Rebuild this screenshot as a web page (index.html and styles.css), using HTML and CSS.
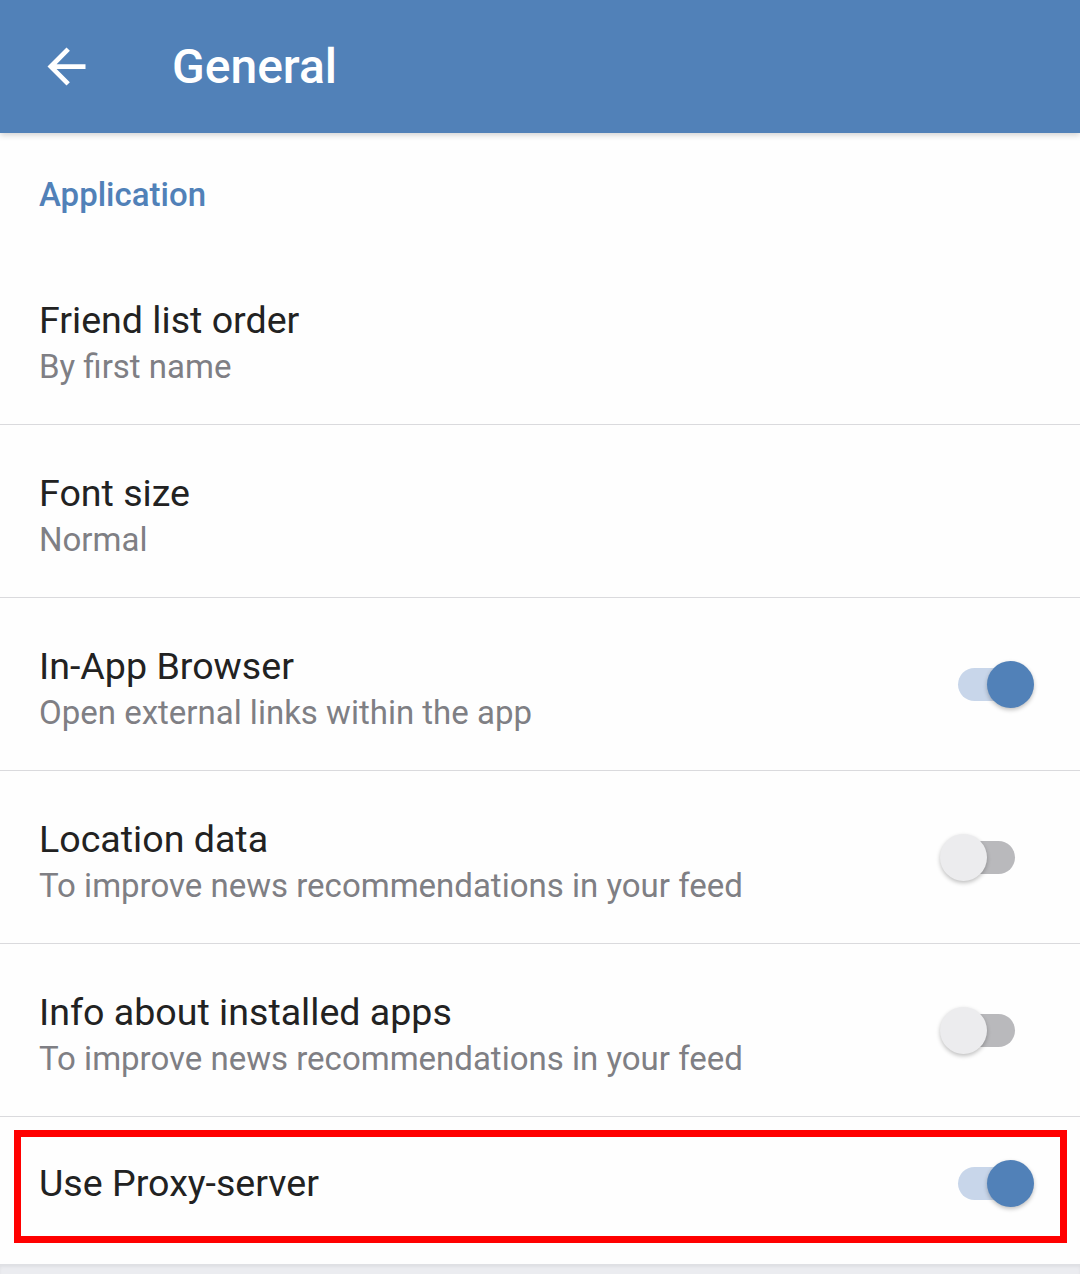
FILE: index.html
```html
<!DOCTYPE html>
<html lang="en">
<head>
    <meta charset="UTF-8">
    <title>General</title>
    <link rel="stylesheet" href="styles.css">
</head>
<body>
<header class="toolbar">
    <svg class="back" viewBox="0 0 24 24" width="57" height="57">
        <path d="M20 11H7.83l5.59-5.59L12 4l-8 8 8 8 1.41-1.41L7.83 13H20v-2z" fill="#fff"/>
    </svg>
    <h1>General</h1>
</header>

<div class="settings">
    <div class="group-title">Application</div>

    <div class="pref">
        <div class="pref-text">
            <div class="pref-title">Friend list order</div>
            <div class="pref-summary">By first name</div>
        </div>
    </div>

    <div class="pref">
        <div class="pref-text">
            <div class="pref-title">Font size</div>
            <div class="pref-summary">Normal</div>
        </div>
    </div>

    <div class="pref">
        <div class="pref-text">
            <div class="pref-title">In-App Browser</div>
            <div class="pref-summary">Open external links within the app</div>
        </div>
        <span class="switch on"><span class="track"></span><span class="thumb"></span></span>
    </div>

    <div class="pref">
        <div class="pref-text">
            <div class="pref-title">Location data</div>
            <div class="pref-summary">To improve news recommendations in your feed</div>
        </div>
        <span class="switch"><span class="track"></span><span class="thumb"></span></span>
    </div>

    <div class="pref">
        <div class="pref-text">
            <div class="pref-title">Info about installed apps</div>
            <div class="pref-summary">To improve news recommendations in your feed</div>
        </div>
        <span class="switch"><span class="track"></span><span class="thumb"></span></span>
    </div>

    <div class="pref-last">
        <div class="highlight">
            <div class="pref-title">Use Proxy-server</div>
            <span class="switch on"><span class="track"></span><span class="thumb"></span></span>
        </div>
    </div>
</div>
<div class="footer"></div>
</body>
</html>
```

FILE: styles.css
```css
body {
    margin: 0;
    background: #fefefe;
    font-family: Roboto, "Noto Sans", sans-serif;
    overflow: hidden;
}
.toolbar {
    height: 133px;
    background: #5181b8;
    display: flex;
    align-items: center;
    position: relative;
    box-shadow: 0 2px 6px rgba(0,0,0, 0.18);
    z-index: 1;
}
.toolbar .back {
    margin-left: 38px;
    margin-top: -1px;
}
.toolbar h1 {
    margin: 0 0 0 77px;
    color: #fff;
    font-size: 48px;
    font-weight: 500;
}
.group-title {
    height: 119px;
    padding: 42px 0 0 39px;
    box-sizing: border-box;
    color: #5181b8;
    font-size: 33px;
    font-weight: 500;
}
.pref {
    height: 173px;
    box-sizing: border-box;
    border-bottom: 1px solid #dadadd;
    padding: 0 46px 0 39px;
    display: flex;
    align-items: center;
    justify-content: space-between;
}
.pref-text {
    padding-top: 10px;
}
.pref-title {
    font-size: 37.6px;
    color: #222;
    line-height: 46px;
}
.pref-summary {
    font-size: 33px;
    color: #7f7f84;
    line-height: 47px;
}
.pref-last {
    padding: 13px 13px 21px 14px;
}
.highlight {
    height: 113px;
    box-sizing: border-box;
    border: 7px solid #ff0000;
    padding: 0 26px 7px 18px;
    display: flex;
    align-items: center;
    justify-content: space-between;
}
.switch {
    position: relative;
    width: 94px;
    height: 47px;
    flex: 0 0 auto;
}
.switch .track {
    position: absolute;
    left: 18px;
    top: 7px;
    width: 57px;
    height: 33px;
    border-radius: 17px;
    background: #b9b9bc;
}
.switch .thumb {
    position: absolute;
    left: 0;
    top: 0;
    width: 47px;
    height: 47px;
    border-radius: 50%;
    background: #ececee;
    box-shadow: 0 2px 4px rgba(0,0,0, 0.25);
}
.switch.on .track {
    background: #c8d6ea;
}
.switch.on .thumb {
    left: 47px;
    background: #5181b8;
}
.footer {
    height: 20px;
    background: #ebecf0;
    box-shadow: inset 0 3px 3px rgba(0,0,0, 0.05);
}
```
